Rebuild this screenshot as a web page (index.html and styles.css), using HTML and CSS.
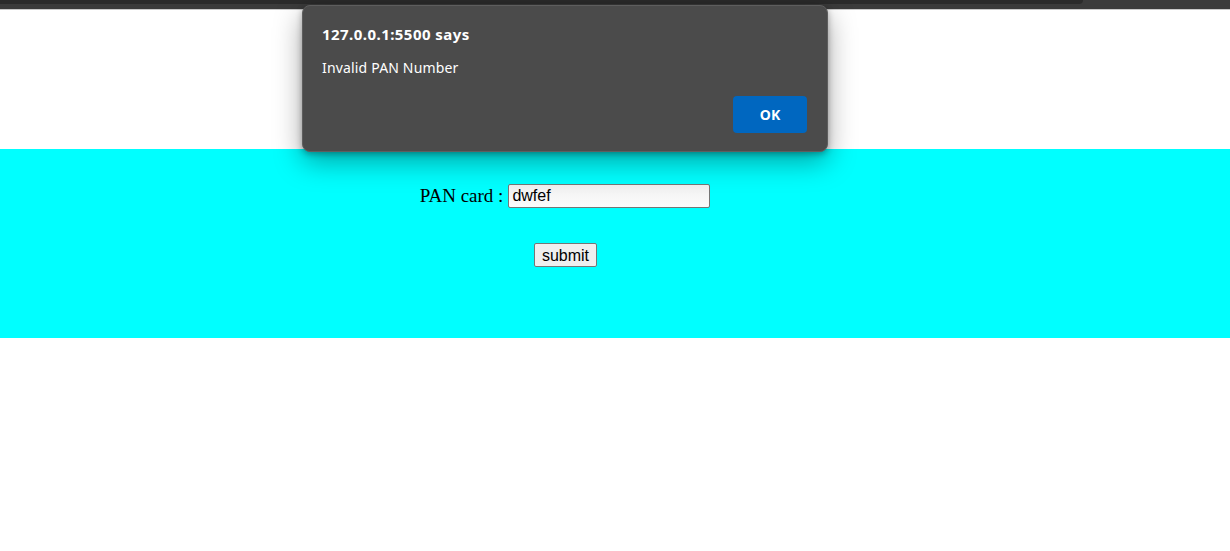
FILE: index.html
```html
<!DOCTYPE html>
<html>
<head>
<meta charset="utf-8">
<link rel="stylesheet" href="styles.css">
</head>
<body>
<div class="chrome"><div class="chrome-tab"></div></div>
<div class="page">
  <div class="spacer"></div>
  <div class="band">
    <form class="form">
      <div class="row">
        <label class="label">PAN card : </label><input class="field" type="text" value="dwfef">
      </div>
      <div class="row btn-row">
        <button class="submit" type="button">submit</button>
      </div>
    </form>
  </div>
</div>
<div class="dialog">
  <div class="dlg-title">127.0.0.1:5500 says</div>
  <div class="dlg-msg">Invalid PAN Number</div>
  <div class="dlg-actions"><button class="ok" type="button">OK</button></div>
</div>
</body>
</html>
```
FILE: styles.css
```css
html, body {
  margin: 0;
  padding: 0;
  background: #ffffff;
}
body {
  position: relative;
  width: 1230px;
  height: 551px;
  overflow: hidden;
}
.chrome {
  height: 10px;
  background: #3b3b3b;
  border-bottom: 1px solid #c9c9c9;
  box-sizing: border-box;
}
.chrome-tab {
  width: 1083px;
  height: 4px;
  background: #2b2b2b;
  border-bottom-right-radius: 6px;
}
.page {
  font-family: "Liberation Serif", serif;
}
.spacer {
  height: 139px;
}
.band {
  background: #00ffff;
  height: 189px;
  box-sizing: border-box;
  padding-top: 35px;
}
.form {
  width: 1130px;
  margin: 0;
}
.row {
  display: flex;
  justify-content: center;
  align-items: center;
}
.label {
  font-size: 19px;
  color: #000;
  margin-right: 5px;
}
.field {
  width: 202px;
  height: 24px;
  box-sizing: border-box;
  border: 1px solid #767676;
  border-radius: 2px;
  padding: 1px 3px;
  font-family: "Liberation Sans", Arial, sans-serif;
  font-size: 16px;
  color: #000;
  background: linear-gradient(#f0f0f0, #fcfcfc);
}
.btn-row {
  margin-top: 35px;
  padding-left: 1px;
}
.submit {
  height: 24px;
  width: 63px;
  box-sizing: border-box;
  border: 1px solid #767676;
  border-radius: 2px;
  background: #efefef;
  font-family: "Liberation Sans", Arial, sans-serif;
  font-size: 16px;
  color: #000;
  padding: 1px 0 0;
}
.dialog {
  position: absolute;
  left: 302px;
  top: 5px;
  width: 526px;
  height: 147px;
  box-sizing: border-box;
  background: #4b4b4b;
  border: 1px solid #5e5e5e;
  border-radius: 8px;
  box-shadow: 0 10px 28px rgba(0, 0, 0, 0.35), 0 2px 6px rgba(0, 0, 0, 0.3);
  padding: 18px 20px 0 19px;
  font-family: "Noto Sans", "Open Sans", sans-serif;
  color: #ffffff;
}
.dlg-title {
  font-weight: 700;
  font-size: 15px;
  letter-spacing: 0.45px;
  line-height: 20px;
}
.dlg-msg {
  font-size: 14px;
  letter-spacing: 0.17px;
  line-height: 20px;
  margin-top: 14px;
}
.dlg-actions {
  display: flex;
  justify-content: flex-end;
  margin-top: 18px;
}
.ok {
  width: 74px;
  height: 37px;
  border: none;
  border-radius: 4px;
  background: #0067c0;
  color: #ffffff;
  font-family: "Noto Sans", "Open Sans", sans-serif;
  font-weight: 700;
  font-size: 14px;
  padding: 0;
}
```
